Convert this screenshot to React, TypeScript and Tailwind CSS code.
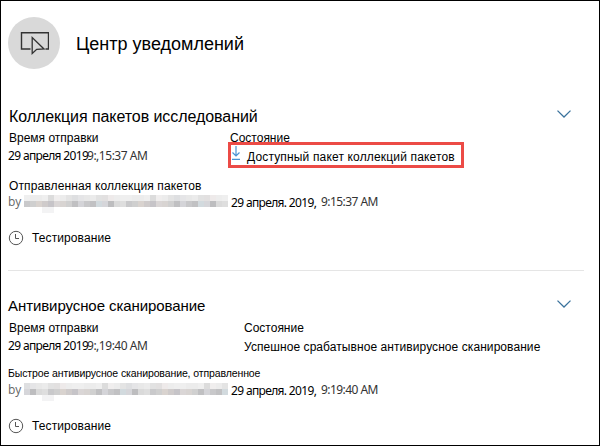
import React from "react";

const topTones = ["#efefef", "#e4e4e4", "#eeeaea", "#dcdcdc", "#ebebeb", "#ececec", "#dedfe1", "#ededed", "#f0eeee", "#e2e2e2", "#ececec", "#e5e5e7", "#efefef", "#ececec", "#e2e0e0", "#efefef", "#e8e8e8"];
const bottomTones = ["#c9c9cb", "#dad6d6", "#c8c8ca", "#dadada", "#cfcbcb", "#c0c0c2", "#d6d6da", "#cfcfcf", "#d8d4d2", "#c1c1c3", "#dedede", "#c6c4c8", "#d4d4d8", "#bdbdbf", "#d9d3cf", "#d0d0d0", "#d2dade"];

function Mosaic({ shift }: { shift: number }) {
  const cells = Array.from({ length: 34 }, (_, i) => i);
  return (
    <div className="relative -top-px grid h-3 min-w-0 flex-1 grid-cols-[repeat(34,minmax(0,1fr))] grid-rows-2">
      {cells.map((i) => (
        <span key={`t${i}`} style={{ backgroundColor: topTones[(i * 5 + shift) % 17] }} />
      ))}
      {cells.map((i) => (
        <span key={`b${i}`} style={{ backgroundColor: bottomTones[(i * 7 + shift) % 17] }} />
      ))}
      <span className="absolute left-[18px] top-3 h-[6px] w-[12px] bg-[#f3f3f4]" />
    </div>
  );
}

function Clock() {
  return (
    <svg className="h-4 w-4" viewBox="0 0 16 16" fill="none" stroke="#555" strokeWidth="1">
      <circle cx="8" cy="8" r="6.7" />
      <path d="M7.5 4v4.5H11" />
    </svg>
  );
}

function Chevron() {
  return (
    <svg className="h-2 w-[14px]" viewBox="0 0 14 8" fill="none" stroke="#3a729c" strokeWidth="1.3">
      <path d="M.5.6 7 7 13.5.6" />
    </svg>
  );
}

function Sent({ time, shift }: { time: string; shift: number }) {
  return (
    <div className="flex h-4 items-center whitespace-nowrap font-['Noto_Sans',sans-serif] text-[12px] leading-4 text-black">
      <div className="flex w-[220px] items-center gap-[3px]">
        <span className="font-['Open_Sans',sans-serif] text-[#666]">by</span>
        <Mosaic shift={shift} />
      </div>
      <span className="ml-[3px] w-[90px] pt-px tracking-[-0.65px]">29 апреля. 2019,</span>
      <span className="tracking-[-0.55px] text-[#333]">{time} AM</span>
    </div>
  );
}

function Submitted({ time }: { time: string }) {
  return (
    <div className="flex h-4 whitespace-nowrap font-['Noto_Sans',sans-serif] text-[12px] leading-4 text-black">
      <span className="w-[79px] tracking-[-0.65px]">29 апреля 2019</span>
      <span className="tracking-[-0.48px] text-[#333]">9:,{time} AM</span>
    </div>
  );
}

function Comment() {
  return (
    <div className="flex h-4 items-center gap-2 font-['Liberation_Sans',sans-serif] text-[12px] leading-4 tracking-[0.1px]">
      <Clock />
      <span>Тестирование</span>
    </div>
  );
}

export default function App() {
  return (
    <main className="h-[446px] w-[600px] overflow-hidden border border-black bg-white pl-[7px] pr-[15px] font-['Liberation_Sans',sans-serif] text-black">
      <header className="flex items-center gap-4 pt-4">
        <div className="flex h-[52px] w-[52px] items-center justify-center rounded-full bg-[#d9d9d9]">
          <svg className="h-6 w-[30px]" viewBox="0 0 30 24" fill="none" stroke="#333" strokeWidth="1.4">
            <path d="M11.5 18H2.5V1.7h27V18H26.5" />
            <path d="M13.2 6.5v16l4.5-4.2 7.3-.3z" strokeWidth="1.3" />
          </svg>
        </div>
        <h1 className="whitespace-nowrap pt-px text-[18px] leading-6">Центр уведомлений</h1>
      </header>

      <section className="pt-[38px]">
        <div className="flex h-5 items-start justify-between">
          <h2 className="whitespace-nowrap pl-px text-[16px] leading-5 tracking-[-0.07px]">Коллекция пакетов исследований</h2>
          <div className="mr-[13px] flex pt-[3px]"><Chevron /></div>
        </div>
        <div className="flex">
          <div className="w-[220px] pt-[3px]">
            <div className="pl-px text-[12px] leading-4">Время отправки</div>
            <div className="pt-[2px]"><Submitted time="15:37" /></div>
          </div>
          <div className="pt-[3px]">
            <div className="h-[12px] pl-[2px] text-[12px] leading-4">Состояние</div>
            <div className="flex h-[26px] w-[236px] items-center border-[3px] border-[#ec4b46]">
              <svg className="mb-1 mr-[6px] h-[14px] w-[10px]" viewBox="0 0 10 14" fill="none" stroke="#4a93d4" strokeWidth="1.2">
                <path d="M5 0v10M1.5 6.5 5 10l3.5-3.5M1 13.4h8" />
              </svg>
              <span className="whitespace-nowrap pt-[3px] text-[12px] leading-4 tracking-[0.16px]">Доступный пакет коллекций пакетов</span>
            </div>
          </div>
        </div>
        <div className="whitespace-nowrap pl-px pt-[10px] text-[12px] leading-4 tracking-[0.13px]">Отправленная коллекция пакетов</div>
        <Sent time="9:15:37" shift={0} />
        <div className="pt-5"><Comment /></div>
      </section>

      <div className="mt-6 h-px bg-[#e5e5e5]" />

      <section className="pt-[25px]">
        <div className="flex h-[21px] items-start justify-between">
          <h2 className="whitespace-nowrap text-[15px] leading-5 tracking-[-0.08px]">Антивирусное сканирование</h2>
          <div className="mr-[13px] flex pt-[4px]"><Chevron /></div>
        </div>
        <div className="flex pt-[3px]">
          <div className="w-[236px]">
            <div className="pl-px text-[12px] leading-4">Время отправки</div>
            <div className="pt-[2px]"><Submitted time="19:40" /></div>
          </div>
          <div>
            <div className="text-[12px] leading-4">Состояние</div>
            <div className="whitespace-nowrap pt-[3px] text-[12px] leading-4 tracking-[0.07px]">Успешное срабатывное антивирусное сканирование</div>
          </div>
        </div>
        <div className="whitespace-nowrap pt-[10px] text-[10.5px] leading-4 tracking-[-0.11px]">Быстрое антивирусное сканирование, отправленное</div>
        <div className="pt-px"><Sent time="9:19:40" shift={6} /></div>
        <div className="pt-5"><Comment /></div>
      </section>
    </main>
  );
}
